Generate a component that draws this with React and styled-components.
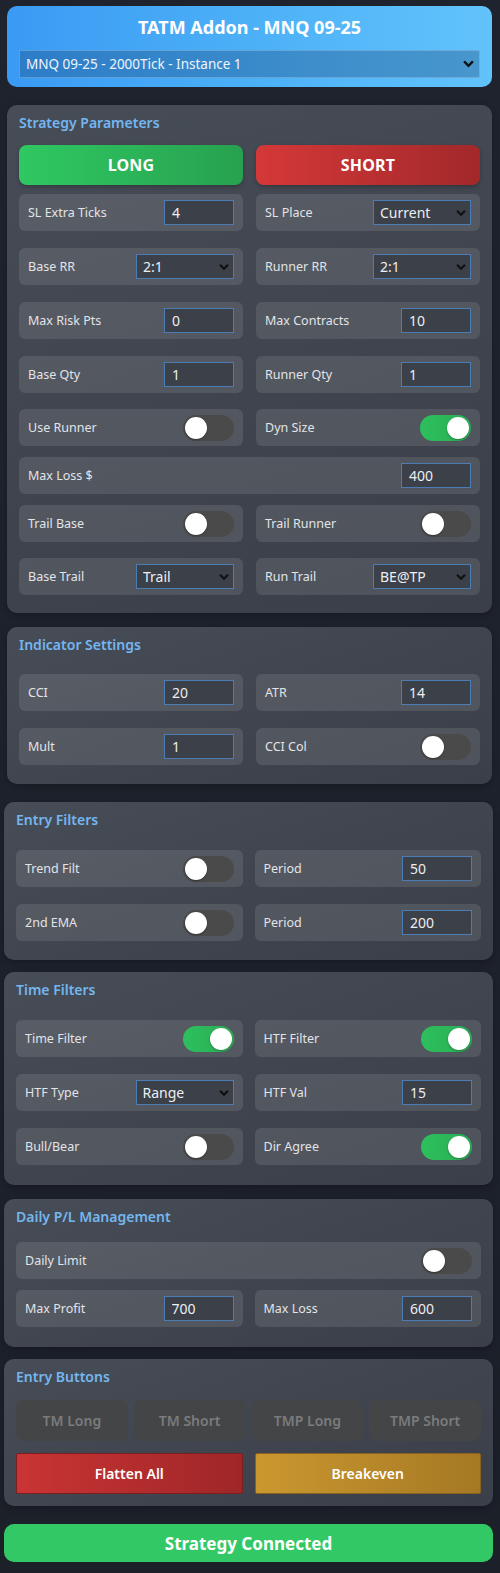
import React, { useState } from "react";
import styled, { createGlobalStyle } from "styled-components";

const GlobalStyle = createGlobalStyle`
  html, body {
    margin: 0;
    padding: 0;
    background: #1e222c;
  }
  body {
    font-family: "Segoe UI", "Noto Sans", "Open Sans", sans-serif;
    color: #e4e6ea;
  }
  * {
    box-sizing: border-box;
  }
`;

const Page = styled.div`
  width: 500px;
  min-height: 1573px;
  padding: 6px 7px 11px 4px;
  background: linear-gradient(180deg, #1f232d 0%, #1c2029 100%);
  display: flex;
  flex-direction: column;
`;

const Header = styled.div`
  margin: 0 1px 0 3px;
  height: 81px;
  border-radius: 10px;
  padding: 9px 12px 0 12px;
  background: linear-gradient(90deg, #3a9af4 0%, #4cb0f7 50%, #62c3fb 100%);
  display: flex;
  flex-direction: column;
  align-items: stretch;
`;

const HeaderTitle = styled.h1`
  margin: 0;
  text-align: center;
  font-size: 18px;
  line-height: 24px;
  font-weight: 700;
  color: #ffffff;
`;

const HeaderSelectWrap = styled.div`
  position: relative;
  margin-top: 11px;
  height: 28px;
`;

const HeaderSelect = styled.select`
  width: 100%;
  height: 28px;
  appearance: none;
  border: 1px solid rgba(150, 200, 240, 0.45);
  background: rgba(20, 60, 110, 0.32);
  color: #eef5fc;
  font-family: inherit;
  font-size: 13.5px;
  padding: 0 30px 0 6px;
  outline: none;
`;

const Chevron = styled.svg`
  position: absolute;
  right: ${(p) => p.$right || 6}px;
  top: 50%;
  transform: translateY(-50%);
  pointer-events: none;
`;

const Section = styled.section`
  margin-top: ${(p) => p.$mt}px;
  margin-left: ${(p) => p.$ml || 0}px;
  margin-right: ${(p) => p.$mr || 0}px;
  padding: 8px 12px ${(p) => p.$pb || 19}px 12px;
  border-radius: 10px;
  background: linear-gradient(160deg, #474d57 0%, #3f444e 55%, #3a3f49 100%);
  box-shadow: 0 2px 6px rgba(0, 0, 0, 0.25);
`;

const SectionTitle = styled.h2`
  margin: 0 0 ${(p) => p.$mb}px 0;
  font-size: 14px;
  line-height: 20px;
  font-weight: 600;
  color: #74b6ef;
`;

const Grid = styled.div`
  display: grid;
  grid-template-columns: ${(p) => (p.$single ? "1fr" : "1fr 1fr")};
  column-gap: ${(p) => p.$gap || 13}px;
  margin-top: ${(p) => p.$mt || 0}px;
`;

const SideButton = styled.button`
  height: 40px;
  border: none;
  border-radius: 8px;
  font-family: inherit;
  font-size: 16px;
  font-weight: 700;
  color: #ffffff;
  letter-spacing: 0.2px;
  background: ${(p) =>
    p.$side === "long"
      ? "linear-gradient(90deg, #2fc862 0%, #27a14f 100%)"
      : "linear-gradient(90deg, #d53838 0%, #a2282a 100%)"};
  box-shadow: 0 2px 4px rgba(0, 0, 0, 0.25);
`;

const Card = styled.div`
  height: 37px;
  border-radius: 6px;
  background: rgba(255, 255, 255, 0.1);
  padding: 0 9px;
  display: flex;
  align-items: center;
  justify-content: space-between;
`;

const Label = styled.span`
  font-size: 12.5px;
  color: #e2e4e8;
  white-space: nowrap;
`;

const NumInput = styled.input`
  width: 70px;
  height: 25px;
  border: 1px solid #4b7db4;
  background: #3c4048;
  color: #eceef1;
  font-family: inherit;
  font-size: 14px;
  padding: 0 7px;
  outline: none;
`;

const SelectWrap = styled.div`
  position: relative;
  width: 98px;
  height: 25px;
`;

const SmallSelect = styled.select`
  width: 100%;
  height: 25px;
  appearance: none;
  border: 1px solid #4b7db4;
  background: #3c4048;
  color: #eceef1;
  font-family: inherit;
  font-size: 14px;
  padding: 0 20px 0 6px;
  outline: none;
`;

const Track = styled.button`
  position: relative;
  width: 51px;
  height: 26px;
  border: none;
  padding: 0;
  border-radius: 13px;
  background: ${(p) =>
    p.$on ? "linear-gradient(90deg, #2dbf5d 0%, #2aae55 100%)" : "#4a4a4b"};
  cursor: pointer;
`;

const Knob = styled.span`
  position: absolute;
  top: 2px;
  left: ${(p) => (p.$on ? 27 : 2)}px;
  width: 22px;
  height: 22px;
  border-radius: 50%;
  background: #ffffff;
  box-shadow: 0 1px 2px rgba(0, 0, 0, 0.3);
`;

const EntryRow = styled.div`
  display: grid;
  grid-template-columns: repeat(4, 1fr);
  gap: 6px;
`;

const GhostButton = styled.button`
  height: 41px;
  border: none;
  border-radius: 8px;
  background: #444546;
  color: #7a7b7d;
  font-family: inherit;
  font-size: 14px;
  font-weight: 600;
`;

const ActionButton = styled.button`
  height: 41px;
  border-radius: 2px;
  font-family: inherit;
  font-size: 14px;
  font-weight: 600;
  color: #ffffff;
  border: 1px solid ${(p) => (p.$kind === "flat" ? "#7c1d1f" : "#8a6220")};
  background: ${(p) =>
    p.$kind === "flat"
      ? "linear-gradient(90deg, #ca3434 0%, #9f2628 100%)"
      : "linear-gradient(90deg, #cb982f 0%, #a57824 100%)"};
`;

const StatusBar = styled.div`
  margin-top: 18px;
  height: 38px;
  border-radius: 10px;
  background: #33c866;
  color: #ffffff;
  font-size: 17px;
  font-weight: 700;
  display: flex;
  align-items: center;
  justify-content: center;
`;

function ChevronIcon({ right, size = 10 }) {
  return (
    <Chevron $right={right} width={size} height={size * 0.7} viewBox="0 0 10 7">
      <path d="M1 1.2 L5 5.2 L9 1.2" fill="none" stroke="#111" strokeWidth="2.2" />
    </Chevron>
  );
}

function Toggle({ initial }) {
  const [on, setOn] = useState(initial);
  return (
    <Track $on={on} onClick={() => setOn(!on)}>
      <Knob $on={on} />
    </Track>
  );
}

function InputCard({ label, value }) {
  return (
    <Card>
      <Label>{label}</Label>
      <NumInput defaultValue={value} />
    </Card>
  );
}

function SelectCard({ label, value, options }) {
  return (
    <Card>
      <Label>{label}</Label>
      <SelectWrap>
        <SmallSelect defaultValue={value}>
          {options.map((o) => (
            <option key={o}>{o}</option>
          ))}
        </SmallSelect>
        <ChevronIcon right={5} />
      </SelectWrap>
    </Card>
  );
}

function ToggleCard({ label, on }) {
  return (
    <Card>
      <Label>{label}</Label>
      <Toggle initial={on} />
    </Card>
  );
}

export default function App() {
  return (
    <>
      <GlobalStyle />
      <Page>
        <Header>
          <HeaderTitle>TATM Addon - MNQ 09-25</HeaderTitle>
          <HeaderSelectWrap>
            <HeaderSelect defaultValue="MNQ 09-25 - 2000Tick - Instance 1">
              <option>MNQ 09-25 - 2000Tick - Instance 1</option>
            </HeaderSelect>
            <ChevronIcon right={6} size={11} />
          </HeaderSelectWrap>
        </Header>

        <Section $mt={18} $ml={3} $mr={1} $pb={18}>
          <SectionTitle $mb={12}>Strategy Parameters</SectionTitle>
          <Grid>
            <SideButton $side="long">LONG</SideButton>
            <SideButton $side="short">SHORT</SideButton>
          </Grid>
          <Grid $mt={9}>
            <InputCard label="SL Extra Ticks" value="4" />
            <SelectCard label="SL Place" value="Current" options={["Current", "Swing"]} />
          </Grid>
          <Grid $mt={17}>
            <SelectCard label="Base RR" value="2:1" options={["1:1", "2:1", "3:1"]} />
            <SelectCard label="Runner RR" value="2:1" options={["1:1", "2:1", "3:1"]} />
          </Grid>
          <Grid $mt={17}>
            <InputCard label="Max Risk Pts" value="0" />
            <InputCard label="Max Contracts" value="10" />
          </Grid>
          <Grid $mt={17}>
            <InputCard label="Base Qty" value="1" />
            <InputCard label="Runner Qty" value="1" />
          </Grid>
          <Grid $mt={16}>
            <ToggleCard label="Use Runner" on={false} />
            <ToggleCard label="Dyn Size" on={true} />
          </Grid>
          <Grid $mt={11} $single>
            <InputCard label="Max Loss $" value="400" />
          </Grid>
          <Grid $mt={11}>
            <ToggleCard label="Trail Base" on={false} />
            <ToggleCard label="Trail Runner" on={false} />
          </Grid>
          <Grid $mt={16}>
            <SelectCard label="Base Trail" value="Trail" options={["Trail", "BE@TP", "None"]} />
            <SelectCard label="Run Trail" value="BE@TP" options={["Trail", "BE@TP", "None"]} />
          </Grid>
        </Section>

        <Section $mt={14} $ml={3} $mr={1}>
          <SectionTitle $mb={19}>Indicator Settings</SectionTitle>
          <Grid>
            <InputCard label="CCI" value="20" />
            <InputCard label="ATR" value="14" />
          </Grid>
          <Grid $mt={17}>
            <InputCard label="Mult" value="1" />
            <ToggleCard label="CCI Col" on={false} />
          </Grid>
        </Section>

        <Section $mt={18}>
          <SectionTitle $mb={20}>Entry Filters</SectionTitle>
          <Grid $gap={12}>
            <ToggleCard label="Trend Filt" on={false} />
            <InputCard label="Period" value="50" />
          </Grid>
          <Grid $gap={12} $mt={17}>
            <ToggleCard label="2nd EMA" on={false} />
            <InputCard label="Period" value="200" />
          </Grid>
        </Section>

        <Section $mt={12} $pb={20}>
          <SectionTitle $mb={20}>Time Filters</SectionTitle>
          <Grid $gap={12}>
            <ToggleCard label="Time Filter" on={true} />
            <ToggleCard label="HTF Filter" on={true} />
          </Grid>
          <Grid $gap={12} $mt={17}>
            <SelectCard label="HTF Type" value="Range" options={["Range", "Tick", "Minute"]} />
            <InputCard label="HTF Val" value="15" />
          </Grid>
          <Grid $gap={12} $mt={17}>
            <ToggleCard label="Bull/Bear" on={false} />
            <ToggleCard label="Dir Agree" on={true} />
          </Grid>
        </Section>

        <Section $mt={14} $pb={20}>
          <SectionTitle $mb={15}>Daily P/L Management</SectionTitle>
          <Grid $single>
            <ToggleCard label="Daily Limit" on={false} />
          </Grid>
          <Grid $gap={12} $mt={11}>
            <InputCard label="Max Profit" value="700" />
            <InputCard label="Max Loss" value="600" />
          </Grid>
        </Section>

        <Section $mt={12} $pb={12}>
          <SectionTitle $mb={13}>Entry Buttons</SectionTitle>
          <EntryRow>
            <GhostButton>TM Long</GhostButton>
            <GhostButton>TM Short</GhostButton>
            <GhostButton>TMP Long</GhostButton>
            <GhostButton>TMP Short</GhostButton>
          </EntryRow>
          <Grid $gap={12} $mt={12}>
            <ActionButton $kind="flat">Flatten All</ActionButton>
            <ActionButton $kind="be">Breakeven</ActionButton>
          </Grid>
        </Section>

        <StatusBar>Strategy Connected</StatusBar>
      </Page>
    </>
  );
}
